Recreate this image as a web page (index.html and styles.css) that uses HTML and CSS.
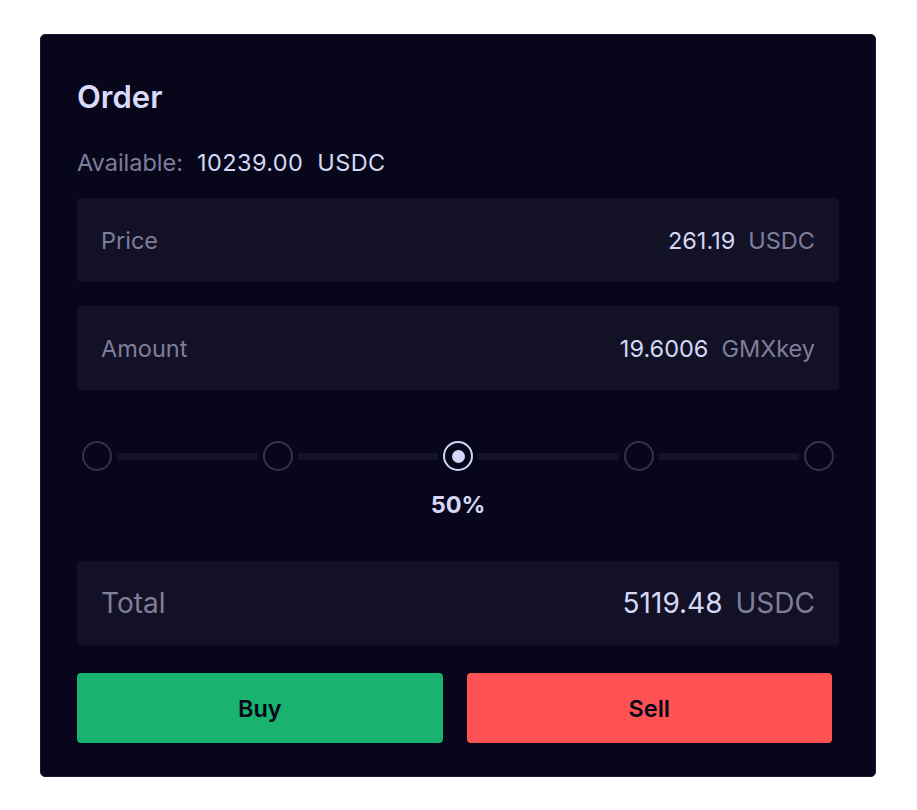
FILE: index.html
```html
<!DOCTYPE html>
<html>
<head>
<meta charset="utf-8">
<link rel="stylesheet" href="styles.css">
</head>
<body>
<div class="card">
  <h2 class="title">Order</h2>
  <div class="available">
    <span class="avail-label">Available:</span>
    <span class="avail-value">10239.00</span>
    <span class="avail-value">USDC</span>
  </div>
  <div class="field">
    <span class="label">Price</span>
    <span class="value"><span class="num">261.19</span><span class="unit">USDC</span></span>
  </div>
  <div class="field field-gap">
    <span class="label">Amount</span>
    <span class="value"><span class="num">19.6006</span><span class="unit">GMXkey</span></span>
  </div>
  <div class="slider">
    <div class="track">
      <span class="dot"></span>
      <span class="seg"></span>
      <span class="dot"></span>
      <span class="seg"></span>
      <span class="dot active"></span>
      <span class="seg"></span>
      <span class="dot"></span>
      <span class="seg"></span>
      <span class="dot"></span>
    </div>
    <div class="percent">50%</div>
  </div>
  <div class="field total">
    <span class="label">Total</span>
    <span class="value"><span class="num">5119.48</span><span class="unit">USDC</span></span>
  </div>
  <div class="actions">
    <button class="btn buy">Buy</button>
    <button class="btn sell">Sell</button>
  </div>
</div>
</body>
</html>
```
FILE: styles.css
```css
html, body {
  margin: 0;
  padding: 0;
  background: #ffffff;
}
body {
  padding: 34px 41px 0 40px;
  font-family: Inter, "Noto Sans", sans-serif;
}
.card {
  box-sizing: border-box;
  width: 836px;
  height: 743px;
  background: #08061a;
  border: 1px solid #1c1a30;
  border-radius: 5px;
  padding: 44px 36px 0 36px;
}
.title {
  margin: 0;
  font-size: 31px;
  line-height: 35px;
  font-weight: 600;
  color: #d9dbfb;
}
.available {
  margin-top: 36px;
  font-size: 23.5px;
  line-height: 25px;
  display: flex;
  gap: 14px;
}
.avail-label {
  color: #7f7d99;
}
.avail-value {
  color: #d5d7f5;
  letter-spacing: 0.4px;
}
.field {
  margin-top: 23px;
  height: 84px;
  background: #121126;
  border-radius: 4px;
  display: flex;
  align-items: center;
  justify-content: space-between;
  padding: 0 24px;
  font-size: 23.5px;
}
.field-gap {
  margin-top: 24px;
}
.label {
  color: #7f7d99;
}
.value {
  display: flex;
  gap: 13px;
}
.num {
  color: #d5d7f5;
}
.unit {
  color: #7f7d99;
}
.slider {
  margin-top: 51px;
  display: flex;
  flex-direction: column;
  align-items: stretch;
}
.track {
  display: flex;
  align-items: center;
  padding: 0 5px;
  gap: 5px;
}
.dot {
  box-sizing: border-box;
  width: 30px;
  height: 30px;
  border-radius: 50%;
  border: 2px solid #35334b;
  flex: none;
  display: flex;
  align-items: center;
  justify-content: center;
}
.dot.active {
  border: 2.5px solid #d3d6f8;
}
.dot.active::after {
  content: "";
  width: 13px;
  height: 13px;
  border-radius: 50%;
  background: #d3d6f8;
}
.seg {
  flex: 1;
  height: 7px;
  background: #141328;
}
.percent {
  margin-top: 21px;
  text-align: center;
  font-size: 23.5px;
  line-height: 25px;
  font-weight: 700;
  color: #d5d7f5;
}
.field.total {
  margin-top: 44px;
  font-size: 28px;
}
.actions {
  margin-top: 28px;
  margin-right: 7px;
  display: flex;
  gap: 24px;
}
.btn {
  flex: 1;
  height: 70px;
  border: none;
  border-radius: 4px;
  font-family: Inter, "Noto Sans", sans-serif;
  font-size: 23.5px;
  font-weight: 600;
  color: #08061a;
  cursor: pointer;
}
.buy {
  background: #19b26f;
}
.sell {
  background: #ff5252;
}
```
